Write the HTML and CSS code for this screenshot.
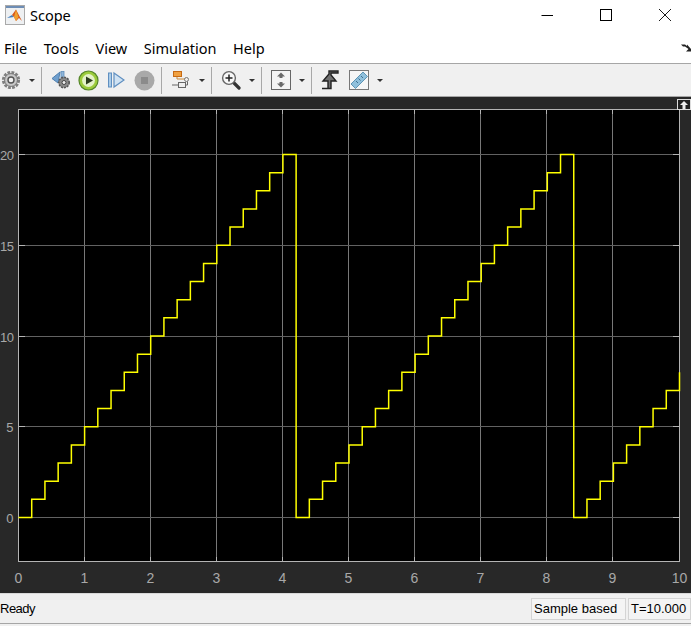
FILE: index.html
```html
<!DOCTYPE html>
<html lang="en">
<head>
    <meta charset="UTF-8">
    <meta name="viewport" content="width=device-width, initial-scale=1.0">
    <title>Scope</title>
    <link rel="stylesheet" href="styles.css">
</head>
<body>
<div class="window">

    <div class="titlebar">
        <svg class="app-icon" width="20" height="20" viewBox="0 0 20 20">
            <rect x="0.5" y="0.5" width="19" height="19" fill="#eef0f2" stroke="#a9a9a9"/>
            <rect x="1" y="1" width="18" height="2" fill="#6d8db5"/>
            <path d="M2 13 L7 10 L9 12 Z" fill="#3f7fc0"/>
            <path d="M7 10 L11 4.5 L17 16 L14 13 L11 16 L9 12 Z" fill="#d8591c"/>
            <path d="M11 4.5 L13.5 12 L11 16 L9 12 Z" fill="#f0a030"/>
        </svg>
        <span class="title">Scope</span>
        <div class="win-buttons">
            <svg width="14" height="14" viewBox="0 0 14 14"><path d="M1.5 7.5 H13" stroke="#000"/></svg>
            <svg width="14" height="14" viewBox="0 0 14 14"><rect x="1.5" y="1.5" width="11" height="11" fill="none" stroke="#000"/></svg>
            <svg width="14" height="14" viewBox="0 0 14 14"><path d="M1 1 L13 13 M13 1 L1 13" stroke="#000" stroke-width="0.9"/></svg>
        </div>
    </div>

    <div class="menubar">
        <span>File</span>
        <span>Tools</span>
        <span>View</span>
        <span>Simulation</span>
        <span>Help</span>
        <svg class="menu-corner" width="10" height="9" viewBox="0 0 10 9"><path d="M0 1.5 H4 L6 3 V1.5 L10 6 V8.5 H5 L7.5 6 L4 3.5 H2 Z" fill="#222"/></svg>
    </div>

    <div class="toolbar">
        <!-- gear -->
        <svg class="tool gear" width="20" height="20" viewBox="0 0 20 20">
            <circle cx="10" cy="10" r="7.6" fill="none" stroke="#808080" stroke-width="3" stroke-dasharray="2.8 1.2"/>
            <circle cx="10" cy="10" r="6.4" fill="#c8c8c8" stroke="#777"/>
            <circle cx="10" cy="10" r="3" fill="#f2f2f2" stroke="#555" stroke-width="1.4"/>
        </svg>
        <i class="caret caret-gear"></i>
        <i class="sep"></i>

        <!-- step back -->
        <svg class="tool back" width="20" height="20" viewBox="0 0 20 20">
            <path d="M9 2 L1 8.5 L7 13 Z" fill="#6f9fce" stroke="#4f7faf"/>
            <rect x="10" y="1.5" width="3" height="7" fill="#8fb6da" stroke="#5f8db8" stroke-width="0.8"/>
            <circle cx="13" cy="12.5" r="5.2" fill="#8a8a8a" stroke="#555" stroke-width="1.6" stroke-dasharray="2 1"/>
            <circle cx="13" cy="12.5" r="2" fill="#eee" stroke="#444"/>
        </svg>
        <!-- run -->
        <svg class="tool play" width="21" height="21" viewBox="0 0 21 21">
            <circle cx="10.5" cy="10.5" r="9.5" fill="#9ccc3c" stroke="#55872a" stroke-width="1.2"/>
            <circle cx="10.5" cy="10.5" r="6.4" fill="#e4f2c8"/>
            <path d="M8 6.5 L15 10.5 L8 14.5 Z" fill="#2b3b1e"/>
        </svg>
        <!-- step forward -->
        <svg class="tool fwd" width="17" height="18" viewBox="0 0 17 18">
            <rect x="0.5" y="2" width="3" height="14" fill="#a9cbe8" stroke="#5f8fc0"/>
            <path d="M6 2 L16 9 L6 16 Z" fill="#cfe2f3" stroke="#5f8fc0" stroke-width="1.2"/>
        </svg>
        <!-- stop -->
        <svg class="tool stop" width="21" height="21" viewBox="0 0 21 21">
            <circle cx="10.5" cy="10.5" r="10" fill="#a9a9a9"/>
            <rect x="7" y="7" width="7" height="7" fill="#8b8b8b"/>
        </svg>
        <i class="sep"></i>

        <!-- signal hierarchy -->
        <svg class="tool blocks" width="20" height="20" viewBox="0 0 20 20">
            <rect x="2.5" y="1.5" width="8" height="5" fill="#f0a040" stroke="#c66a14"/>
            <path d="M6 7 V9 H14" fill="none" stroke="#c98a3a"/>
            <circle cx="15.5" cy="9.5" r="2" fill="#eee" stroke="#777"/>
            <rect x="7.5" y="12.5" width="7" height="5" fill="#eee" stroke="#666"/>
            <path d="M1 15 H7" stroke="#666"/>
            <path d="M15 15 H16.5 V11.5" fill="none" stroke="#666"/>
        </svg>
        <i class="caret"></i>
        <i class="sep"></i>

        <!-- zoom -->
        <svg class="tool zoom" width="20" height="20" viewBox="0 0 20 20">
            <path d="M12 12 L18 18" stroke="#333" stroke-width="3.2" stroke-linecap="round"/>
            <circle cx="8" cy="8" r="6.4" fill="#f7f7f7" stroke="#666" stroke-width="1.4"/>
            <path d="M4.5 8 H11.5 M8 4.5 V11.5" stroke="#222" stroke-width="1.5"/>
        </svg>
        <i class="caret"></i>
        <i class="sep"></i>

        <!-- scale axes -->
        <svg class="tool fit" width="20" height="20" viewBox="0 0 20 20">
            <rect x="0.5" y="0.5" width="19" height="19" fill="#f4f4f4" stroke="#666"/>
            <path d="M10 2.5 L14 6.5 H11.5 V8 H8.5 V6.5 H6 Z M10 17.5 L14 13.5 H11.5 V12 H8.5 V13.5 H6 Z" fill="#6a6a6a"/>
        </svg>
        <i class="caret"></i>
        <i class="sep"></i>

        <!-- triggers -->
        <svg class="tool trig" width="18" height="20" viewBox="0 0 18 20">
            <path d="M1 18.5 H7 V11 H2 L8 4 V1 H17 V3 H10 V5 L15 11 H10 V18.5 Z" fill="#707070" stroke="#222" stroke-width="1.4"/>
        </svg>
        <!-- cursor measurements -->
        <svg class="tool ruler" width="20" height="20" viewBox="0 0 20 20">
            <rect x="0.5" y="0.5" width="19" height="19" fill="#f6f6f6" stroke="#777"/>
            <path d="M2 14 L14 2 L18.5 6.5 L6.5 18.5 Z" fill="#8fc0dc" stroke="#5d94b4"/>
            <path d="M7 11 L9 13 M9.5 8.5 L11.5 10.5 M12 6 L14 8" stroke="#3f7090"/>
        </svg>
        <i class="caret"></i>
    </div>

    <div class="plot-panel">
        <svg class="plot" width="691" height="496" viewBox="0 97 691 496">
            <rect x="18" y="109" width="662" height="453" fill="#000"/>
            <g class="grid">
                <path class="grid-v" d="M84.5 109 V562 M150.5 109 V562 M216.5 109 V562 M282.5 109 V562 M348.5 109 V562 M414.5 109 V562 M480.5 109 V562 M546.5 109 V562 M612.5 109 V562"/>
                <path class="grid-h" d="M18 154.5 H680 M18 245.5 H680 M18 336.5 H680 M18 426.5 H680 M18 517.5 H680"/>
            </g>
            <path class="ticks" d="M84.5 562 V557 M150.5 562 V557 M216.5 562 V557 M282.5 562 V557 M348.5 562 V557 M414.5 562 V557 M480.5 562 V557 M546.5 562 V557 M612.5 562 V557
                M84.5 109 V114 M150.5 109 V114 M216.5 109 V114 M282.5 109 V114 M348.5 109 V114 M414.5 109 V114 M480.5 109 V114 M546.5 109 V114 M612.5 109 V114
                M18 154.5 H25 M18 245.5 H25 M18 336.5 H25 M18 426.5 H25 M18 517.5 H25
                M680 154.5 H673 M680 245.5 H673 M680 336.5 H673 M680 426.5 H673 M680 517.5 H673"/>
            <rect class="frame" x="18.5" y="109.5" width="661" height="452"/>

            <path class="signal" d="M18.5 517.5 h13.22
                v-18.15 h13.22 v-18.15 h13.22 v-18.15 h13.22 v-18.15 h13.22
                v-18.15 h13.22 v-18.15 h13.22 v-18.15 h13.22 v-18.15 h13.22
                v-18.15 h13.22 v-18.15 h13.22 v-18.15 h13.22 v-18.15 h13.22
                v-18.15 h13.22 v-18.15 h13.22 v-18.15 h13.22 v-18.15 h13.22
                v-18.15 h13.22 v-18.15 h13.22 v-18.15 h13.22 v-18.15 h13.22
                V517.5 h13.22
                v-18.15 h13.22 v-18.15 h13.22 v-18.15 h13.22 v-18.15 h13.22
                v-18.15 h13.22 v-18.15 h13.22 v-18.15 h13.22 v-18.15 h13.22
                v-18.15 h13.22 v-18.15 h13.22 v-18.15 h13.22 v-18.15 h13.22
                v-18.15 h13.22 v-18.15 h13.22 v-18.15 h13.22 v-18.15 h13.22
                v-18.15 h13.22 v-18.15 h13.22 v-18.15 h13.22 v-18.15 h13.22
                V517.5 h13.22
                v-18.15 h13.22 v-18.15 h13.22 v-18.15 h13.22 v-18.15 h13.22
                v-18.15 h13.22 v-18.15 h13.22 v-18.15 h13.22 v-18.15"/>

            <g class="y-labels">
                <text x="13.5" y="160">20</text>
                <text x="13.5" y="251">15</text>
                <text x="13.5" y="342">10</text>
                <text x="13" y="432">5</text>
                <text x="13" y="523">0</text>
            </g>
            <g class="x-labels">
                <text x="18.5" y="583">0</text>
                <text x="84.5" y="583">1</text>
                <text x="150.5" y="583">2</text>
                <text x="216.5" y="583">3</text>
                <text x="282.5" y="583">4</text>
                <text x="348.5" y="583">5</text>
                <text x="414.5" y="583">6</text>
                <text x="480.5" y="583">7</text>
                <text x="546.5" y="583">8</text>
                <text x="612.5" y="583">9</text>
                <text x="679.5" y="583">10</text>
            </g>
        </svg>
        <svg class="undock" width="14" height="11" viewBox="0 0 14 11">
            <rect x="0.5" y="0.5" width="13" height="10" fill="#222" stroke="#ddd"/>
            <path d="M7 2 L11 6 H8.5 V10 H5.5 V6 H3 Z" fill="#eee"/>
        </svg>
    </div>

    <div class="statusbar">
        <span class="status-text">Ready</span>
        <span class="status-cell cell-mode">Sample based</span>
        <span class="status-cell cell-time">T=10.000</span>
    </div>

</div>
</body>
</html>
```

FILE: styles.css
```css
html, body {
    margin: 0;
    padding: 0;
}
body {
    background-color: #f0f0f0;
    font-family: "Noto Sans", "Open Sans", sans-serif;
    color: #000;
    overflow: hidden;
}
.window {
    width: 691px;
    height: 626px;
    display: flex;
    flex-direction: column;
}
.titlebar {
    height: 33px;
    background: white;
    display: flex;
    align-items: center;
    padding-left: 5px;
}
.app-icon {
    margin-top: -3px;
}
.title {
    margin-left: 5px;
    margin-top: -3px;
    font-size: 14.5px;
}
.win-buttons {
    margin-left: auto;
    display: flex;
    gap: 45px;
    padding-right: 19px;
    margin-top: -4px;
}
.menubar {
    height: 30px;
    background: white;
    display: flex;
    align-items: center;
    padding-left: 4px;
    gap: 16.5px;
    font-size: 14.5px;
    position: relative;
}
.menu-corner {
    position: absolute;
    right: 0;
    top: 10px;
}
.toolbar {
    height: 32px;
    background-color: #f0f0f0;
    border-top: 1px solid #a6a6a6;
    border-bottom: 1px solid #a6a6a6;
    display: flex;
    align-items: center;
}
.tool {
    flex: none;
    margin-left: 9px;
}
.caret {
    width: 0;
    height: 0;
    border-left: 3px solid transparent;
    border-right: 3px solid transparent;
    border-top: 3px solid #333;
    flex: none;
    margin-left: 8px;
}
.sep {
    width: 1px;
    height: 27px;
    background-color: #a8a8a8;
    flex: none;
    margin-left: 6px;
}
.gear { margin-left: 1px; }
.play { margin-left: 7px; }
.ruler { margin-left: 10px; }

.plot-panel {
    height: 496px;
    background-color: #282828;
    position: relative;
}
.plot {
    display: block;
}
.grid path {
    fill: none;
    stroke-width: 1;
}
.grid-v {
    stroke: #787878;
}
.grid-h {
    stroke: #626262;
}
.ticks {
    fill: none;
    stroke: #b4b4b4;
}
.frame {
    fill: none;
    stroke: #b4b4b4;
}
.signal {
    fill: none;
    stroke: #ffff00;
    stroke-width: 1.5;
}
.plot text {
    font-family: "Liberation Sans", Arial, sans-serif;
    fill: #a8a8a8;
}
.y-labels text {
    font-size: 13px;
    letter-spacing: -0.5px;
    text-anchor: end;
}
.x-labels text {
    font-size: 14px;
    text-anchor: middle;
}
.undock {
    position: absolute;
    right: 0;
    top: 2px;
}
.statusbar {
    height: 29px;
    background-color: #f0f0f0;
    border-top: 1px solid #d8d8d8;
    border-bottom: 1px solid #a6a6a6;
    display: flex;
    align-items: center;
    font-family: "Liberation Sans", Arial, sans-serif;
    font-size: 13px;
}
.status-text {
    margin-left: 0;
    margin-right: auto;
    letter-spacing: -0.5px;
}
.status-cell {
    height: 22px;
    line-height: 20px;
    border: 1px solid #d4d4d4;
    box-sizing: border-box;
    background: #f4f4f4;
    padding-left: 2px;
}
.cell-mode {
    width: 95px;
    margin-right: 2px;
}
.cell-time {
    width: 63px;
}
```
